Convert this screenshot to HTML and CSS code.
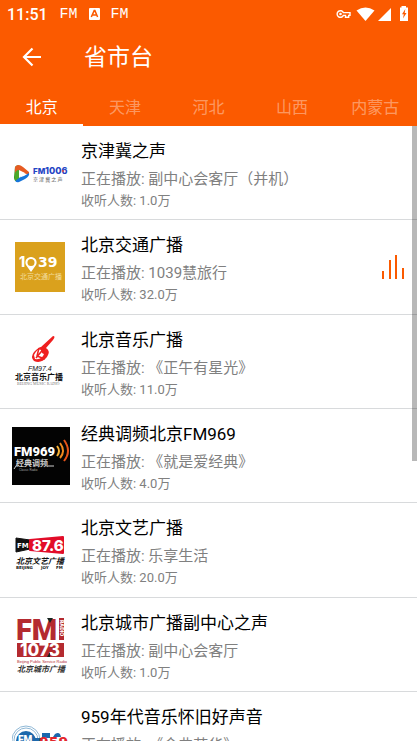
FILE: index.html
```html
<!DOCTYPE html>
<html lang="zh-CN">
<head>
<meta charset="utf-8">
<meta name="viewport" content="width=device-width, initial-scale=1">
<title>省市台</title>
<link rel="stylesheet" href="styles.css">
</head>
<body>
<header class="top">
  <div class="status">
    <span class="clock">11:51</span>
    <span class="notice">FM</span>
    <svg class="notice-icon" width="11" height="12" viewBox="0 0 11 12"><rect width="11" height="12" rx="1" fill="#fff"/><path d="M2.3 9 5.2 2.6h.7L8.6 9M3.6 7h3.8" fill="none" stroke="#fb5a00" stroke-width="1.5"/></svg>
    <span class="notice">FM</span>
    <svg class="system" width="73" height="16" viewBox="0 0 73 16" fill="#fff">
      <path fill="none" stroke="#fff" stroke-width="1.4" d="M7.4 6.600A3.300 3.300 0 1 0 7.400 9.400H9.500V11.300H12.700V9.400H14V6.600Z"/>
      <circle cx="4.500" cy="8" r="1.300"/>
      <path d="M20.500 4.500Q29.500-1.500 38.500 4.500L29.500 15Z"/>
      <path d="M42 15 55 2V15Z"/>
      <path d="M65.500 1.500V0H70V1.500H72V15H64V1.500Z"/>
      <path fill="#fb5a00" d="M69.300 3 66 8.300H67.800L67 12.500 70.500 7H68.700Z"/>
    </svg>
  </div>
  <div class="bar">
    <button class="back" type="button" aria-label="返回"><svg width="20" height="20" viewBox="0 0 20 20" fill="none" stroke="#fff" stroke-width="2.200"><path d="M19 10H2M10.500 1.500 2 10l8.500 8.500"/></svg></button>
    <h1 class="title">省市台</h1>
  </div>
  <nav class="tabs">
    <button class="tab tab-active" type="button">北京</button>
    <button class="tab" type="button">天津</button>
    <button class="tab" type="button">河北</button>
    <button class="tab" type="button">山西</button>
    <button class="tab" type="button">内蒙古</button>
  </nav>
</header>
<main class="content">
  <ul class="stations">
    <li class="station">
      <svg class="logo" viewBox="0 0 58 58">
        <path d="M3 23Q5 20 8 22L11 26 7 36Q2 39 2 33Z" fill="#3a9b25"/>
        <path d="M3 23Q6 19 11 23L17 28 17 31 7 27 7 33Q2 33 3 23Z" fill="#e65b22"/>
        <path d="M17 29Q18 32 13 35L7 38Q3 39 3 35L12 32Z" fill="#1675da"/>
        <path d="M3 31Q3 26 7 26V34L3 37Z" fill="#4ba928"/>
        <path d="M7 26 13 29 7 34Z" fill="#fff"/>
        <text class="block" x="21" y="30" font-size="8" fill="#2444c4">FM</text>
        <text class="block" x="33" y="30" font-size="9" fill="#2444c4">1006</text>
        <circle cx="51" cy="27" r="1" fill="#ed493e"/>
        <text class="cjk" x="21" y="37" font-size="5" fill="#555">京 津 冀 之 声</text>
      </svg>
      <div class="info"><h2 class="name">京津冀之声</h2><p class="playing">正在播放: 副中心会客厅（并机）</p><p class="listeners">收听人数: 1.0万</p></div>
    </li>
    <li class="station">
      <svg class="logo" viewBox="0 0 58 58">
        <rect x="3" y="4" width="50" height="50" fill="#daa11d"/>
        <g fill="#fff"><text class="block" x="7" y="29" font-size="14">1</text><text class="wide" x="26" y="29" font-size="14">39</text></g>
        <path d="M19 19a5.500 5.500 0 0 1 5 8L19 34l-5-7a5.500 5.500 0 0 1 5-8Z" fill="#fff"/><circle cx="19" cy="24.500" r="3.500" fill="#daa11d"/>
        <text class="cjk" x="8" y="41" font-size="7" fill="#f2dc9d">北京交通广播</text>
      </svg>
      <div class="info"><h2 class="name">北京交通广播</h2><p class="playing">正在播放: 1039慧旅行</p><p class="listeners">收听人数: 32.0万</p></div>
      <svg class="level" width="22" height="24" viewBox="0 0 22 24" fill="#fb5a00"><rect y="16" width="2" height="8"/><rect x="7" y="5" width="2" height="19"/><rect x="13" width="2" height="24"/><rect x="20" y="13" width="2" height="11"/></svg>
    </li>
    <li class="station">
      <svg class="logo" viewBox="0 0 58 58">
        <path d="M41 3Q44 3 41 7L34 15Q39 18 35 24 29 31 22 28 18 24 22 19 27 14 29 14Z" fill="#ef2020"/>
        <path d="M22 22Q26 15 29 17 29 20 32 21 30 27 23 26Z" fill="#fff"/>
        <path d="M24 25 38 8M27 15 25 23 33 26" stroke="#ef2020" stroke-width="1.500" fill="none"/>
        <text class="sans" x="16" y="38" font-size="7" font-style="italic" fill="#111">FM97.4</text>
        <text class="cjk bold" x="3" y="47" font-size="8" fill="#111">北京音乐广播</text>
        <text class="serif" x="5" y="52" font-size="4" fill="#777">BEIJING MUSIC RADIO</text>
      </svg>
      <div class="info"><h2 class="name">北京音乐广播</h2><p class="playing">正在播放: 《正午有星光》</p><p class="listeners">收听人数: 11.0万</p></div>
    </li>
    <li class="station">
      <svg class="logo" viewBox="0 0 58 58">
        <rect width="58" height="58" fill="#030303"/>
        <text class="heavy" x="2" y="29" font-size="13" fill="#fff">FM969</text>
        <g fill="none" stroke-width="2"><path d="M45 19Q49 24 45 29" stroke="#f9b233"/><path d="M48 16Q54 24 48 31" stroke="#f28a20"/><path d="M52 13Q60 24 52 34" stroke="#e65318"/></g>
        <text class="cjk bold" x="4" y="39" font-size="8" fill="#ccc">经典调频</text>
        <path d="M2 42 6 36M35 39H42" stroke="#ccc"/>
        <text class="sans" x="7" y="44" font-size="3" fill="#aaa">Classic Radio</text>
      </svg>
      <div class="info"><h2 class="name">经典调频北京FM969</h2><p class="playing">正在播放: 《就是爱经典》</p><p class="listeners">收听人数: 4.0万</p></div>
    </li>
    <li class="station">
      <svg class="logo" viewBox="0 0 58 58">
        <path d="M4 17 18 19V28L4 31Z" fill="#111" stroke="#111" stroke-linejoin="round"/>
        <path d="M18 19 51 16V32L18 29Z" fill="#e20d29" stroke="#e20d29" stroke-width="2" stroke-linejoin="round"/>
        <text class="wide" x="5" y="27" font-size="7" fill="#fff">FM</text>
        <text class="block" x="20" y="30" font-size="15" fill="#fff">87.6</text>
        <text class="cjk bold" x="4" y="43" font-size="8" font-style="italic" fill="#111">北京文艺广播</text>
        <text class="wide" x="4" y="48" font-size="4" fill="#111">BEIJING</text><text class="wide" x="29" y="48" font-size="4" fill="#111">JOY</text><text class="wide" x="44" y="48" font-size="4" fill="#111">FM</text>
      </svg>
      <div class="info"><h2 class="name">北京文艺广播</h2><p class="playing">正在播放: 乐享生活</p><p class="listeners">收听人数: 20.0万</p></div>
    </li>
    <li class="station">
      <svg class="logo" viewBox="0 0 58 58">
        <g fill="#b42a30"><text class="heavy" x="4" y="24" font-size="29">FM</text><rect x="47" y="2" width="5" height="22"/><rect x="5" y="27" width="47" height="14"/></g>
        <path d="M35 2H41L38 7Z" fill="#172420"/>
        <text class="block" transform="translate(48 4) rotate(90)" x="0" y="0" font-size="5" fill="#fff">RADIO</text>
        <text class="block" x="8" y="40" font-size="17" fill="#fff">1073</text>
        <path d="M35 41 38 36V41Z" fill="#172420"/>
        <text class="sans" x="5" y="47" font-size="4" fill="#b42a30">Beijing Public Service Radio</text>
        <text class="cjk bold" x="5" y="56" font-size="8" font-style="italic" fill="#333">北京城市广播</text>
      </svg>
      <div class="info"><h2 class="name">北京城市广播副中心之声</h2><p class="playing">正在播放: 副中心会客厅</p><p class="listeners">收听人数: 1.0万</p></div>
    </li>
    <li class="station">
      <svg class="logo" viewBox="0 0 58 58">
        <g fill="none" stroke="#8fb8d6"><circle cx="14" cy="30" r="14"/><circle cx="14" cy="30" r="12"/></g>
        <circle cx="14" cy="31" r="10" fill="#1c68ac"/>
        <text class="heavy" x="6" y="33" font-size="10" fill="#fff">FM</text>
        <path d="M23 28H31L30 34H22ZM30 23H38V28H30ZM43 24Q48 21 49 27H41Z" fill="#1c68ac"/>
        <text class="wide" x="27" y="37" font-size="14" fill="#e3262c">959</text>
      </svg>
      <div class="info"><h2 class="name">959年代音乐怀旧好声音</h2><p class="playing">正在播放: 《金曲芳华》</p><p class="listeners">收听人数: 1.0万</p></div>
    </li>
  </ul>
  <div class="thumb"></div>
</main>
</body>
</html>
```
FILE: styles.css
```css
* { box-sizing: border-box; }
body {
  margin: 0;
  height: 100vh;
  overflow: hidden;
  display: flex;
  flex-direction: column;
  background: #fff;
  color: #000;
  font-family: Roboto, "Noto Sans CJK SC", sans-serif;
}
h1, h2, p, ul { margin: 0; padding: 0; font-weight: 400; }
button { border: 0; padding: 0; background: none; color: inherit; font: inherit; }
svg { display: block; flex: none; }

.top { flex: none; background: #fb5a00; color: #fff; }
.status { display: flex; align-items: center; height: 28px; padding: 0 8px 0 7px; }
.clock { font-size: 16px; font-weight: 500; margin-right: 12px; }
.notice { font-family: "Liberation Mono", monospace; font-size: 15px; }
.notice-icon { margin: 0 11px; }
.system { margin-left: auto; }
.bar { display: flex; align-items: center; height: 58px; padding-left: 22px; gap: 42px; }
.back { flex: none; }
.title { font-size: 23px; line-height: 32px; padding-top: 2px; }
.tabs { display: flex; height: 40px; }
.tab {
  flex: 1;
  border-top: 2px solid transparent;
  border-bottom: 2px solid transparent;
  font-size: 16px;
  color: rgba(255, 255, 255, 0.4);
}
.tab-active { color: #fff; border-bottom-color: #fff; }

.content { position: relative; flex: 1; min-height: 0; overflow: hidden; }
.stations { list-style: none; }
.station {
  display: flex;
  align-items: center;
  gap: 11px;
  height: 94px;
  padding: 0 13px 0 12px;
  border-bottom: 1px solid #d8dadc;
}
.station:nth-child(3n + 2) { height: 95px; }
.logo { width: 58px; height: 58px; }
.info { flex: 1; min-width: 0; white-space: nowrap; }
.name { font-size: 17px; line-height: 30px; }
.playing { font-size: 15px; line-height: 26px; color: #808080; }
.listeners { font-size: 13px; line-height: 18px; color: #808080; }
.thumb {
  position: absolute;
  top: 0;
  right: 0;
  width: 5px;
  height: 54.4%;
  background: rgba(0, 0, 0, 0.28);
}

.heavy { font-family: Roboto, sans-serif; font-weight: 900; }
.block { font-family: Inter, sans-serif; font-weight: 800; }
.wide { font-family: "DejaVu Sans", sans-serif; font-weight: 700; }
.sans { font-family: "Liberation Sans", sans-serif; }
.serif { font-family: "Liberation Serif", serif; }
.cjk { font-family: "Noto Sans CJK SC", sans-serif; }
.bold { font-weight: 700; }
```
